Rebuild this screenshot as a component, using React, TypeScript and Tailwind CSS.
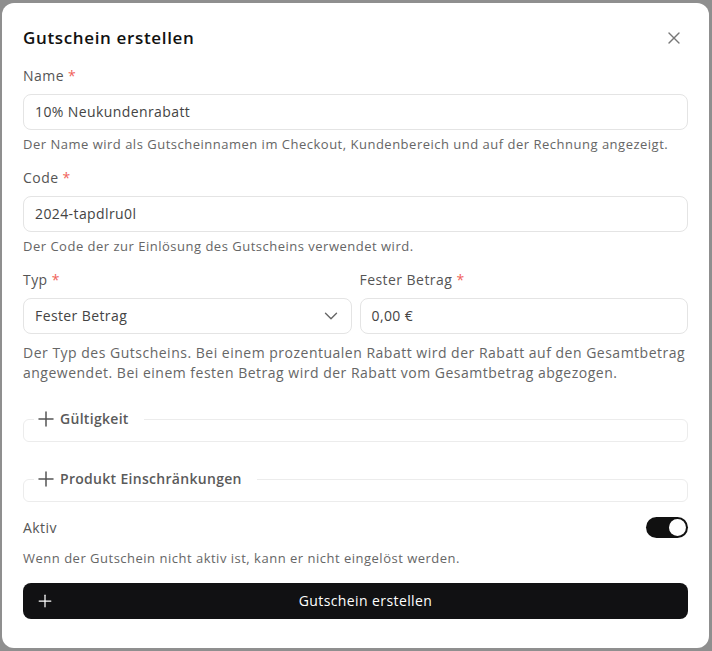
import React from "react";

const font = { fontFamily: "'Open Sans', 'Noto Sans', sans-serif" };

function PlusIcon({ size = 24, className = "" }: { size?: number; className?: string }) {
  return (
    <svg width={size} height={size} viewBox="0 0 24 24" fill="none" stroke="currentColor" strokeWidth={1.5} strokeLinecap="round" strokeLinejoin="round" className={className}>
      <path d="M5 12h14" />
      <path d="M12 5v14" />
    </svg>
  );
}

function Label({ children }: { children: React.ReactNode }) {
  return (
    <div className="text-sm leading-5 tracking-[0.45px] text-[#555]">
      {children} <span className="text-[#f0625a]">*</span>
    </div>
  );
}

function Input({ value }: { value: string }) {
  return (
    <div className="mt-2 flex h-9 items-center rounded-lg border border-[#e4e4e4] px-[11px] text-sm tracking-[0.4px] text-[#444]">
      {value}
    </div>
  );
}

function Section({ title, className = "" }: { title: string; className?: string }) {
  return (
    <fieldset className={"rounded-md border border-[#ececec] " + className}>
      <legend className="ml-[10px] flex items-center gap-[2px] pr-[15px] text-sm font-semibold tracking-[0.3px] text-[#5a5a5a]">
        <PlusIcon size={24} className="text-[#555]" />
        <span>{title}</span>
      </legend>
      <div className="h-[10px]" />
    </fieldset>
  );
}

export default function App() {
  return (
    <div style={font} className="h-[651px] w-[712px] bg-[#8f8f8f] pb-[3px] pl-[2px] pr-[3px] pt-[3px]">
      <div className="h-[645px] rounded-xl bg-white px-[21px] pt-[21px]">
        <div className="flex h-7 items-center justify-between">
          <h2 className="text-[17px] font-semibold tracking-[0.65px] text-[#111]">Gutschein erstellen</h2>
          <svg width={20} height={20} viewBox="0 0 24 24" fill="none" stroke="#777" strokeWidth={1.6} strokeLinecap="round" className="mr-[4px]">
            <path d="M18 6 6 18" />
            <path d="m6 6 12 12" />
          </svg>
        </div>

        <div className="mt-[14px]">
          <Label>Name</Label>
          <Input value="10% Neukundenrabatt" />
          <p className="mt-[5px] text-[13px] leading-[18px] tracking-[0.5px] text-[#666]">
            Der Name wird als Gutscheinnamen im Checkout, Kundenbereich und auf der Rechnung angezeigt.
          </p>
        </div>

        <div className="mt-[15px]">
          <Label>Code</Label>
          <Input value="2024-tapdlru0l" />
          <p className="mt-[5px] text-[13px] leading-[18px] tracking-[0.5px] text-[#666]">
            Der Code der zur Einlösung des Gutscheins verwendet wird.
          </p>
        </div>

        <div className="mt-[15px]">
          <div className="grid grid-cols-2 gap-2">
            <div>
              <Label>Typ</Label>
              <div className="mt-2 flex h-9 items-center justify-between rounded-lg border border-[#e4e4e4] pl-[11px] pr-[9px] text-sm tracking-[0.4px] text-[#444]">
                <span>Fester Betrag</span>
                <svg width={22} height={22} viewBox="0 0 24 24" fill="none" stroke="#666" strokeWidth={1.5} strokeLinecap="round" strokeLinejoin="round">
                  <path d="m6 9 6 6 6-6" />
                </svg>
              </div>
            </div>
            <div>
              <Label>Fester Betrag</Label>
              <Input value="0,00 €" />
            </div>
          </div>
          <p className="mt-[9px] text-sm leading-5 tracking-[0.5px] text-[#666]">
            Der Typ des Gutscheins. Bei einem prozentualen Rabatt wird der Rabatt auf den Gesamtbetrag angewendet. Bei einem festen Betrag wird der Rabatt vom Gesamtbetrag abgezogen.
          </p>
        </div>

        <Section title="Gültigkeit" className="mt-[24px]" />
        <Section title="Produkt Einschränkungen" className="mt-[25px]" />

        <div className="mt-[15px] flex items-center justify-between">
          <span className="text-sm leading-5 tracking-[0.45px] text-[#555]">Aktiv</span>
          <div className="flex h-[21px] w-[42px] items-center justify-end rounded-full bg-[#111] px-[2px]">
            <div className="h-[17px] w-[17px] rounded-full bg-white" />
          </div>
        </div>
        <p className="mt-[11px] text-[13px] leading-[18px] tracking-[0.5px] text-[#666]">
          Wenn der Gutschein nicht aktiv ist, kann er nicht eingelöst werden.
        </p>

        <button className="mt-[16px] flex h-9 w-full items-center rounded-lg bg-[#111113] pl-[12px] pr-[12px] text-sm tracking-[0.4px] text-white">
          <PlusIcon size={20} className="text-white" />
          <span className="flex-1 text-center">Gutschein erstellen</span>
        </button>
      </div>
    </div>
  );
}
